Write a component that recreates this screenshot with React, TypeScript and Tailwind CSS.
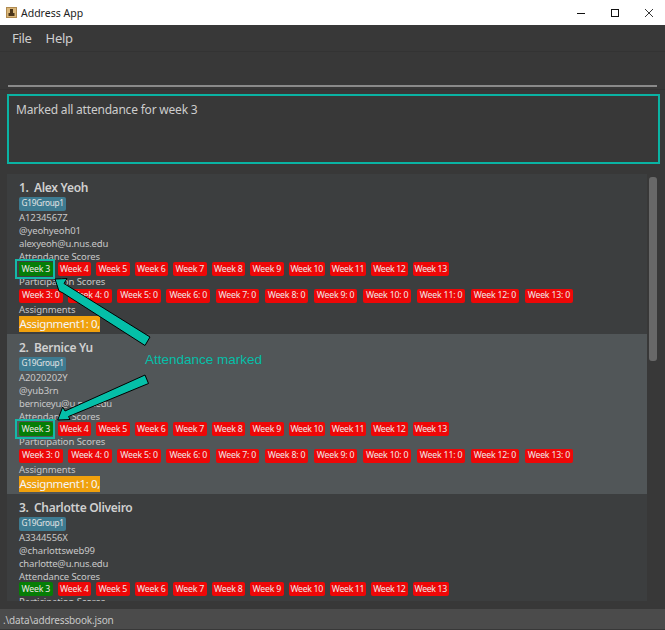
const weeks = [3, 4, 5, 6, 7, 8, 9, 10, 11, 12, 13];

function Chip({ label, green, wide, tight }: { label: string; green?: boolean; wide?: boolean; tight?: boolean }) {
  return (
    <span className={`flex h-[14px] items-center justify-center rounded-[2px] text-[8.75px] leading-none text-[#f0e8e8] ${tight ? "tracking-[-0.35px]" : "tracking-[-0.2px]"} ${wide ? "px-[3px]" : "min-w-[33.5px] px-[2px]"} ${green ? "bg-[#067d06]" : "bg-[#ee0707]"}`}>
      {label}
    </span>
  );
}

function Card({ idx, name, id, handle, email, alt }: { idx: number; name: string; id: string; handle: string; email: string; alt?: boolean }) {
  return (
    <div className={`h-[160px] shrink-0 pl-[12px] pt-[5px] text-[9.5px] leading-[13px] tracking-[-0.1px] text-[#c8c8c8] ${alt ? "bg-[#515658]" : "bg-[#3c3e3f]"}`}>
      <div className="flex h-[16px] items-center pt-[1px] text-[12px] font-semibold leading-none tracking-[-0.3px] text-[#d0d0d0]">
        <span className="w-[15px]">{idx}.</span>
        <span>{name}</span>
      </div>
      <div className="mt-[1.5px] flex">
        <span className="flex h-[14px] items-center rounded-[2px] bg-[#3e7b91] px-[2.5px] text-[8.25px] leading-none tracking-[-0.25px] text-[#e4e4e4]">G19Group1</span>
      </div>
      <div>
        <div className="h-[13px]">{id}</div>
        <div className="h-[13px]">{handle}</div>
        <div className="h-[13px] tracking-[-0.2px]">{email}</div>
        <div className="h-[12.5px]">Attendance Scores</div>
      </div>
      <div className="flex h-[14px] gap-[5px]">
        {weeks.map((w) => (
          <Chip key={w} label={`Week ${w}`} green={w === 3} tight={w >= 10} />
        ))}
      </div>
      <div className="h-[12.5px] leading-[12px]">Participation Scores</div>
      <div className="flex h-[14px] gap-[5.5px]">
        {weeks.map((w) => (
          <Chip key={w} label={`Week ${w}: 0`} wide />
        ))}
      </div>
      <div className="h-[13px]">Assignments</div>
      <div className="mt-[0.5px] flex">
        <span className="flex h-[16px] items-center bg-[#f0a00c] px-[0.5px] text-[11.5px] leading-none tracking-[-0.4px] text-[#f5f5f5]">Assignment1: 0,</span>
      </div>
    </div>
  );
}

function Overlay() {
  return (
    <>
      <div className="absolute left-[15px] top-[259px] h-[20px] w-[40px] border-2 border-[#14b8a8]" />
      <div className="absolute left-[15px] top-[419px] h-[20px] w-[40px] border-2 border-[#14b8a8]" />
      <svg className="absolute left-0 top-0" width="665" height="630" viewBox="0 0 665 630" fill="none">
        <polygon points="55,279 67,278.5 64,283.5 150,337 145,345.5 63,293 59,291" fill="#05bfa8" stroke="#000" strokeWidth="1" />
        <polygon points="57.7,420 62.7,407 65,411 145,375 148.5,383.5 68.5,416.5 70,419.5" fill="#05bfa8" stroke="#000" strokeWidth="1" />
      </svg>
      <div className="absolute left-[145px] top-[352px] text-[13.5px] leading-[16px] text-[#05bfa8] [font-family:'Liberation_Sans',sans-serif]">
        Attendance marked
      </div>
    </>
  );
}

export default function App() {
  return (
    <div className="relative flex h-[630px] w-[665px] flex-col overflow-hidden bg-[#383838] [font-family:'Noto_Sans','Open_Sans',sans-serif]">
      <div className="flex h-[25px] shrink-0 items-center bg-white">
        <svg className="ml-[6px]" width="11" height="11" viewBox="0 0 11 11">
          <rect x="0" y="0" width="11" height="11" fill="#b08a50" />
          <rect x="1" y="1" width="9" height="9" fill="#d9b679" />
          <rect x="4" y="2" width="3" height="4" fill="#4a3418" />
          <rect x="2.5" y="6" width="6" height="3" fill="#4a3418" />
        </svg>
        <span className="ml-[4px] pt-[2px] text-[10.5px] text-[#222]">Address App</span>
        <div className="ml-auto flex items-center">
          <svg width="10" height="10" viewBox="0 0 10 10" className="mr-[24px]">
            <path d="M1 5.5H9" stroke="#111" strokeWidth="1" />
          </svg>
          <svg width="10" height="10" viewBox="0 0 10 10" className="mr-[24px]">
            <rect x="1.5" y="1.5" width="7" height="7" stroke="#111" fill="none" />
          </svg>
          <svg width="10" height="10" viewBox="0 0 10 10" className="mr-[11px]">
            <path d="M1 1L9 9M9 1L1 9" stroke="#222" strokeWidth="0.9" />
          </svg>
        </div>
      </div>
      <div className="flex h-[27px] shrink-0 items-center gap-[14px] border-b border-[#333] pl-[12px] text-[13px] leading-none tracking-[-0.3px] text-[#cfcfcf]">
        <span>File</span>
        <span>Help</span>
      </div>
      <div className="h-[38px] shrink-0 border-b border-[#333] px-[8px] pt-[33px]">
        <div className="h-[2px] w-[649px] bg-[#8a8a8a]" />
      </div>
      <div className="ml-[7px] mt-[4px] h-[70px] w-[653px] shrink-0 border-[2px] border-[#0ab3a3] px-[7px] pt-[5px] text-[12px] leading-[18px] tracking-[-0.2px] text-[#cdcdcd]">
        Marked all attendance for week 3
      </div>
      <div className="mt-[10px] flex h-[427px] shrink-0 pl-[7px]">
        <div className="flex h-[427px] w-[640px] flex-col overflow-hidden">
          <Card idx={1} name="Alex Yeoh" id="A1234567Z" handle="@yeohyeoh01" email="alexyeoh@u.nus.edu" />
          <Card idx={2} name="Bernice Yu" id="A2020202Y" handle="@yub3rn" email="berniceyu@u.nus.edu" alt />
          <Card idx={3} name="Charlotte Oliveiro" id="A3344556X" handle="@charlottsweb99" email="charlotte@u.nus.edu" />
        </div>
        <div className="ml-[2px] mt-[3px] h-[184px] w-[8px] rounded-[3px] bg-[#686868]" />
      </div>
      <div className="mt-[8px] flex h-[20px] shrink-0 items-center bg-[#4b4b4b] pl-[3px] pt-[2px] text-[10px] leading-none tracking-[-0.15px] text-[#c8c8c8]">
        .\data\addressbook.json
      </div>
      <Overlay />
    </div>
  );
}
